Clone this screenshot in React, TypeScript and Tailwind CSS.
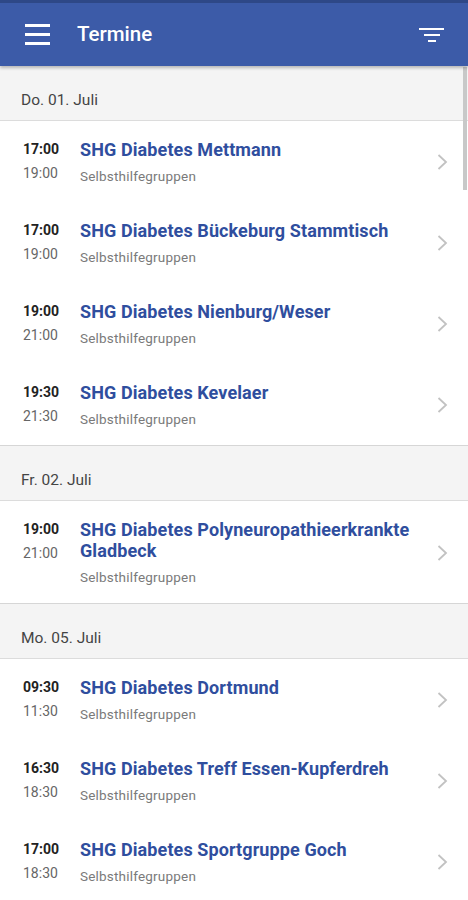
import React from "react";

type Item = { start: string; end: string; title: string };
type Day = { label: string; items: Item[] };

const days: Day[] = [
  {
    label: "Do. 01. Juli",
    items: [
      { start: "17:00", end: "19:00", title: "SHG Diabetes Mettmann" },
      { start: "17:00", end: "19:00", title: "SHG Diabetes Bückeburg Stammtisch" },
      { start: "19:00", end: "21:00", title: "SHG Diabetes Nienburg/Weser" },
      { start: "19:30", end: "21:30", title: "SHG Diabetes Kevelaer" },
    ],
  },
  {
    label: "Fr. 02. Juli",
    items: [
      { start: "19:00", end: "21:00", title: "SHG Diabetes Polyneuropathieerkrankte Gladbeck" },
    ],
  },
  {
    label: "Mo. 05. Juli",
    items: [
      { start: "09:30", end: "11:30", title: "SHG Diabetes Dortmund" },
      { start: "16:30", end: "18:30", title: "SHG Diabetes Treff Essen-Kupferdreh" },
      { start: "17:00", end: "18:30", title: "SHG Diabetes Sportgruppe Goch" },
    ],
  },
];

function Chevron() {
  return (
    <svg width="12" height="18" viewBox="0 0 12 18" fill="none">
      <path d="M2.5 2l7.5 7-7.5 7" stroke="#c2c2c2" strokeWidth="1.8" />
    </svg>
  );
}

function Row({ item }: { item: Item }) {
  return (
    <div className="flex items-center bg-white pl-[23px] pr-[20px] pt-[18px] pb-[17px]">
      <div className="w-[57px] shrink-0 self-start">
        <div className="text-[14px] leading-[21px] font-bold text-[#222]">{item.start}</div>
        <div className="mt-[3px] text-[14px] leading-[21px] text-[#666]">{item.end}</div>
      </div>
      <div className="flex-1 pr-3">
        <div className="text-[18px] leading-[21px] font-bold tracking-[0.1px] text-[#2f4e9e]">{item.title}</div>
        <div className="mt-[7px] text-[13.5px] leading-[18px] tracking-[0.2px] text-[#7a7a7a]">Selbsthilfegruppen</div>
      </div>
      <Chevron />
    </div>
  );
}

export default function App() {
  return (
    <div className="relative h-[900px] w-[468px] overflow-hidden bg-[#f4f4f4] font-['Roboto',sans-serif]">
      <header className="relative z-10 flex h-[66px] items-center border-t-[3px] border-[#2e4887] bg-[#3c5ba8] shadow-[0_2px_3px_rgba(0,0,0,0.25)]">
        <div className="ml-[25px] flex w-[25px] flex-col gap-[6px]">
          <span className="h-[3px] bg-white" />
          <span className="h-[3px] bg-white" />
          <span className="h-[3px] bg-white" />
        </div>
        <div className="ml-[27px] text-[20.5px] font-medium text-white">Termine</div>
        <div className="ml-auto mr-[24px] flex w-[25px] flex-col items-center gap-[4px]">
          <span className="h-[2px] w-[25px] bg-white" />
          <span className="h-[2px] w-[16px] bg-white" />
          <span className="h-[2px] w-[8px] bg-white" />
        </div>
      </header>
      <main>
        {days.map((d) => (
          <section key={d.label}>
            <div className="flex h-[55px] items-end border-b border-[#dcdcdc] bg-[#f4f4f4] pb-[11px] pl-[21px] text-[15.5px] leading-[18px] text-[#444]">
              {d.label}
            </div>
            <div className="border-b border-[#d6d6d6]">
              {d.items.map((it, i) => (
                <Row key={i} item={it} />
              ))}
            </div>
          </section>
        ))}
      </main>
      <div className="absolute right-[1px] top-[67px] h-[123px] w-[4px] bg-[#c8c8c8]" />
    </div>
  );
}
